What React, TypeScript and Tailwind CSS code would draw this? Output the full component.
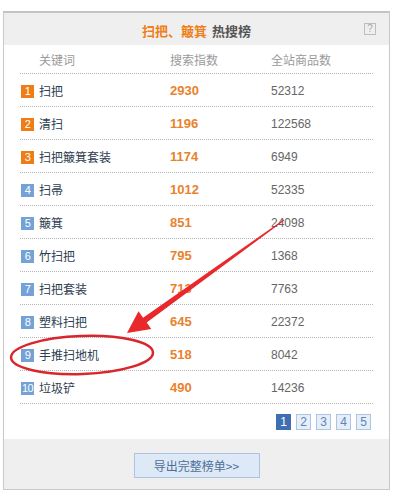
import React from 'react'

const rows = [
  { rank: 1, word: '扫把', index: 2930, count: 52312 },
  { rank: 2, word: '清扫', index: 1196, count: 122568 },
  { rank: 3, word: '扫把簸箕套装', index: 1174, count: 6949 },
  { rank: 4, word: '扫帚', index: 1012, count: 52335 },
  { rank: 5, word: '簸箕', index: 851, count: 24098 },
  { rank: 6, word: '竹扫把', index: 795, count: 1368 },
  { rank: 7, word: '扫把套装', index: 713, count: 7763 },
  { rank: 8, word: '塑料扫把', index: 645, count: 22372 },
  { rank: 9, word: '手推扫地机', index: 518, count: 8042 },
  { rank: 10, word: '垃圾铲', index: 490, count: 14236 },
]

function RankBadge({ rank }: { rank: number }) {
  const hot = rank <= 3
  return (
    <span
      className={`inline-flex items-center justify-center w-[13px] h-[13px] text-[11px] leading-none text-white tracking-[-0.5px] ${
        hot ? 'bg-[#ef7d16]' : 'bg-[#74a2d6]'
      }`}
    >
      {rank}
    </span>
  )
}

export default function App() {
  return (
    <div className="relative w-[396px] h-[497px] bg-white font-['Liberation_Sans','Noto_Sans_CJK_SC',sans-serif]">
      <div className="pt-[11px] pl-[3px] w-[390px]">
        <div className="border border-[#c9c9c9] border-t-2 border-t-[#c4c4c4] bg-white">
          {/* title bar */}
          <div className="relative h-[32px] bg-[#efefef] flex items-center justify-center pt-[3px]">
            <span className="text-[13px] font-bold text-[#ef7f1a] font-['Noto_Sans_CJK_SC',sans-serif]">
              扫把、簸箕
              <span className="text-[#555] ml-[5px]">热搜榜</span>
            </span>
            <span className="absolute right-[13px] top-[10px] w-[12px] h-[12px] border border-[#bdbdbd] flex items-center justify-center text-[10px] leading-none text-[#a8a8a8]">
              ?
            </span>
          </div>

          {/* table */}
          <div className="mx-4">
            <div className="grid grid-cols-[150px_101px_1fr] h-[29px] items-center pt-[2px] border-b border-dotted border-[#b5b5b5] text-[12px] text-[#9a9a9a] font-['Noto_Sans_CJK_SC',sans-serif]">
              <span className="pl-[19px]">关键词</span>
              <span>搜索指数</span>
              <span>全站商品数</span>
            </div>
            {rows.map((r) => (
              <div
                key={r.rank}
                className="grid grid-cols-[150px_101px_1fr] h-[33px] items-center pt-[2px] border-b border-dotted border-[#b5b5b5]"
              >
                <span className="flex items-center pl-[1px] gap-[5px]">
                  <RankBadge rank={r.rank} />
                  <span className="text-[12px] text-[#2e3d4f] font-['Noto_Sans_CJK_SC',sans-serif]">{r.word}</span>
                </span>
                <span className="text-[13px] font-bold text-[#e9822c]">{r.index}</span>
                <span className="text-[12px] text-[#666]">{r.count}</span>
              </div>
            ))}
            <div className="flex justify-end gap-[5px] pt-[10px] pb-[9px] pr-[2px]">
              {[1, 2, 3, 4, 5].map((p) => (
                <span
                  key={p}
                  className={`w-[15px] h-[16px] flex items-center justify-center text-[12px] leading-none border ${
                    p === 1
                      ? 'bg-[#3f6fb0] border-[#3f6fb0] text-white'
                      : 'bg-[#e6eef8] border-[#adc5e2] text-[#5b84bd]'
                  }`}
                >
                  {p}
                </span>
              ))}
            </div>
          </div>

          {/* footer */}
          <div className="h-[50px] bg-[#efefef] flex justify-center pt-[14px]">
            <button className="w-[126px] h-[25px] bg-[#dde9f6] border border-[#abc4e0] text-[12px] text-[#4d6f98] font-['Noto_Sans_CJK_SC',sans-serif]">
              导出完整榜单&gt;&gt;
            </button>
          </div>
        </div>
      </div>

      {/* red annotation */}
      <svg className="absolute inset-0 pointer-events-none" width="396" height="497" viewBox="0 0 396 497">
        <polygon
          points="283.7,219.6 143.1,317.8 138.5,311.3 127,333 151.3,329.1 146.7,322.6 284.3,220.4"
          fill="#e8282b"
        />
        <ellipse
          cx="82"
          cy="355"
          rx="71"
          ry="19"
          fill="none"
          stroke="#d9262c"
          strokeWidth="2.5"
          transform="rotate(-2 82 355)"
        />
      </svg>
    </div>
  )
}
